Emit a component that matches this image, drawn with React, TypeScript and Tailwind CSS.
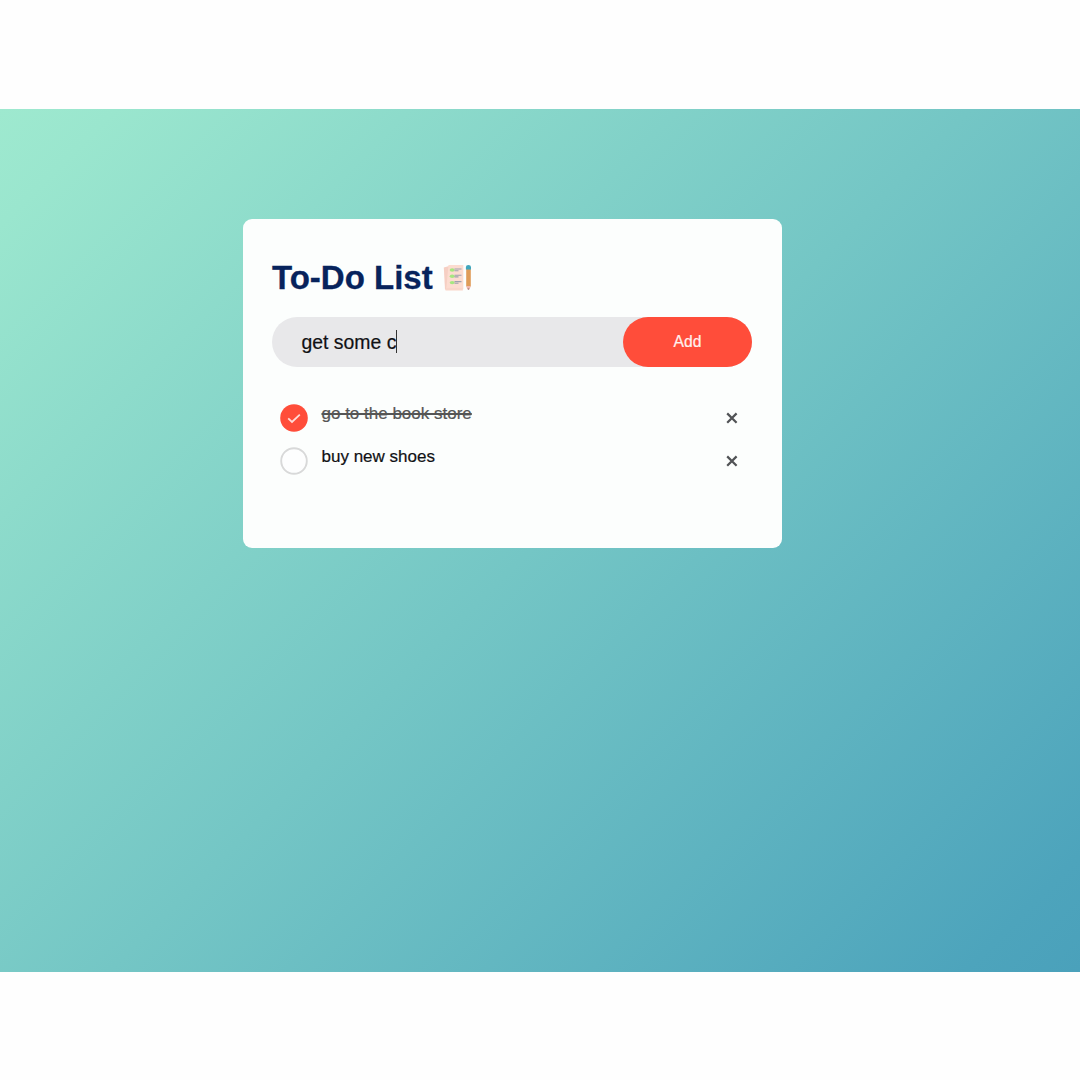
import { useState } from "react";

type Task = { text: string; done: boolean };

function NotesIcon() {
  return (
    <svg className="ml-[10px] h-[28px] w-[30px]" viewBox="0 0 30 28">
      <path d="M0.8 3.4 7 1.8V24.6L2 25.8Z" fill="#f6cfc3" />
      <path d="M5.5 1H20.3V25.3H3.2Z" fill="#fcdcd0" />
      <path d="M3 23.8H19.8V26.4H2.5Z" fill="#f9d6ca" />
      {[6, 12.2, 18.6].map((y) => (
        <g key={y}>
          <ellipse cx="9.2" cy={y} rx="2.5" ry="1.7" fill="#a6e780" />
          <path d={`M11.5 ${y - 1}H18.5M11.5 ${y + 0.7}H15.5`} stroke="#9da1ad" strokeWidth="1.1" />
        </g>
      ))}
      <path d="M23.2 3.5H27.8V22.5H23.2Z" fill="#df9c58" />
      <path d="M22.9 3Q22.9 1 25.4 1T28 3V5.4H22.9Z" fill="#3fa6bd" />
      <path d="M23.2 22H27.8L26.5 25.4H24.3Z" fill="#f0b9ae" />
      <path d="M24.6 24.6H26.4L25.5 26Z" fill="#8b6d72" />
    </svg>
  );
}

function TaskRow({ task, onToggle, onRemove }: { task: Task; onToggle: () => void; onRemove: () => void }) {
  return (
    <li className="flex h-[43px] items-start pl-2">
      <button onClick={onToggle} aria-label="Toggle task" className="mt-[8px] shrink-0">
        <svg className="size-7" viewBox="0 0 28 28" fill="none">
          {task.done ? (
            <>
              <circle cx="14" cy="14" r="13.8" fill="#ff4d3a" />
              <path d="M8.2 14.4 12 17.9 19.8 10.6" stroke="#ffdcd8" strokeWidth="1.8" />
            </>
          ) : (
            <circle cx="14" cy="14" r="12.8" fill="#fdfefe" stroke="#d8d9d9" strokeWidth="1.9" />
          )}
        </svg>
      </button>
      <span
        className={
          task.done
            ? "ml-[13.5px] mt-[8px] flex-1 text-[17px] leading-5 text-[#555] line-through decoration-[1.5px] [-webkit-text-stroke:0.2px_#555]"
            : "ml-[13.5px] mt-[8px] flex-1 text-[17px] leading-5 text-[#101114] [-webkit-text-stroke:0.2px_#101114]"
        }
      >
        {task.text}
      </span>
      <button onClick={onRemove} aria-label="Remove task" className="mr-[14px] mt-[16px]">
        <svg className="size-3" viewBox="0 0 12 12">
          <path d="M1.2 1.4 10.6 10.8M10.6 1.4 1.2 10.8" stroke="#515356" strokeWidth="2.2" />
        </svg>
      </button>
    </li>
  );
}

export default function App() {
  const [tasks, setTasks] = useState<Task[]>([
    { text: "go to the book store", done: true },
    { text: "buy new shoes", done: false },
  ]);

  const toggle = (index: number) =>
    setTasks(tasks.map((t, i) => (i === index ? { ...t, done: !t.done } : t)));
  const remove = (index: number) => setTasks(tasks.filter((_, i) => i !== index));

  return (
    <div className="h-[1080px] w-[1080px] overflow-hidden bg-[#fefefe] py-[108.5px] font-['Liberation_Sans',Arial,sans-serif]">
      <main className="h-[863px] bg-[linear-gradient(135deg,#9ee9cf_0%,#9ae6ce_6%,#74c6c5_50%,#4da4bc_94%,#4aa1bb_100%)] pl-[242.5px] pt-[110.5px]">
        <section className="h-[328.5px] w-[539px] rounded-[9px] bg-[#fcfefd] px-[29.5px] pt-[39px]">
          <h1 className="flex h-10 items-center text-[33px] font-bold text-[#07235c]">
            <span className="[-webkit-text-stroke:0.3px_#07235c]">To-Do List</span>
            <NotesIcon />
          </h1>
          <div className="mt-[19px] flex h-[50px] items-center rounded-full bg-[#e8e8ea]">
            <div className="flex flex-1 items-center pl-[29.5px] text-[19.4px] text-[#101114]">
              <span className="pt-px [-webkit-text-stroke:0.2px_#101114]">get some c</span>
              <span className="h-[23px] w-px bg-[#333]" />
            </div>
            <button className="h-[50px] w-[129px] rounded-full bg-[#ff4d3a] text-[15.7px] text-[#fff1ee] [-webkit-text-stroke:0.2px_#fff1ee]">
              Add
            </button>
          </div>
          <ul className="mt-[29px]">
            {tasks.map((task, i) => (
              <TaskRow key={task.text} task={task} onToggle={() => toggle(i)} onRemove={() => remove(i)} />
            ))}
          </ul>
        </section>
      </main>
    </div>
  );
}
